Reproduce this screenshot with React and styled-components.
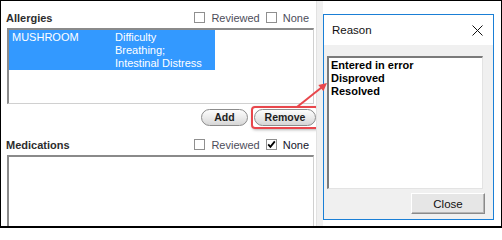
import React from "react";
import styled, { createGlobalStyle } from "styled-components";

const Global = createGlobalStyle`
  html, body { margin: 0; padding: 0; background: #fff; }
  body { font-family: "Liberation Sans", Arial, sans-serif; }
`;

const Frame = styled.div`
  position: relative;
  width: 502px;
  height: 228px;
  box-sizing: border-box;
  border: 1px solid #000;
  border-bottom-width: 2px;
  overflow: hidden;
  display: flex;
  background: #fff;
  font-family: "Liberation Sans", Arial, sans-serif;
`;

const LeftPane = styled.div`
  width: 315px;
  flex: none;
  box-sizing: border-box;
  padding-left: 6px;
  display: flex;
  flex-direction: column;
  overflow: hidden;
  & > * {
    flex-shrink: 0;
  }
`;

const SectionHeader = styled.div`
  width: 307px;
  height: 17px;
  margin-top: ${(p) => p.$top}px;
  display: flex;
  align-items: center;
  justify-content: space-between;
`;

const SectionTitle = styled.span`
  font-size: 11px;
  font-weight: bold;
  color: #2d2d2d;
  margin-left: -1px;
`;

const Checks = styled.div`
  display: flex;
  align-items: center;
  gap: 6px;
  padding-right: 5px;
`;

const CheckLabel = styled.label`
  display: flex;
  align-items: center;
  gap: 6px;
  font-size: 11px;
  color: ${(p) => (p.$dark ? "#14142a" : "#4d4d5a")};
`;

const Box = styled.span`
  width: 11px;
  height: 11px;
  box-sizing: border-box;
  border: 1px solid #8f8f8f;
  background: #fff;
  display: flex;
  align-items: center;
  justify-content: center;
`;

const ListBox = styled.div`
  width: 307px;
  height: ${(p) => p.$h}px;
  margin-top: 2px;
  box-sizing: border-box;
  border-top: 2px solid #8a8a8a;
  border-left: 2px solid #8a8a8a;
  border-right: 1px solid #d0d0d0;
  border-bottom: 1px solid #d0d0d0;
  background: #fff;
`;

const SelectedRow = styled.div`
  width: 206px;
  box-sizing: border-box;
  padding: 1px 3px 0 3px;
  background: #3399ff;
  color: #fff;
  font-size: 11px;
  line-height: 13px;
  display: grid;
  grid-template-columns: 103px 1fr;
`;

const ButtonRow = styled.div`
  width: 309px;
  margin-top: 5px;
  display: flex;
  justify-content: flex-end;
  gap: 6px;
`;

const PillButton = styled.button`
  width: ${(p) => p.$w}px;
  height: 17px;
  padding: 0;
  box-sizing: border-box;
  border: 1px solid #8c8c8c;
  border-radius: 9px;
  background: linear-gradient(#fdfdfd, #e9e9e9 55%, #d6d6d6);
  font-family: "Liberation Sans", Arial, sans-serif;
  font-size: 10.5px;
  font-weight: bold;
  color: #1e1e1e;
  line-height: 15px;
`;

const Highlight = styled.div`
  position: relative;
  display: flex;
  &::after {
    content: "";
    position: absolute;
    inset: -3px;
    border: 2px solid #e8474c;
    border-radius: 4px;
    box-shadow: 1px 1px 3px rgba(0, 0, 0, 0.3);
    pointer-events: none;
  }
`;

const Gutter = styled.div`
  width: 7px;
  flex: none;
  background: #f0f0f0;
  border-left: 1px solid #e2e2e2;
  box-sizing: border-box;
`;

const DialogArea = styled.div`
  flex: 1;
  padding-top: 13px;
  background: #fff;
`;

const Dialog = styled.div`
  width: 171px;
  height: 206px;
  box-sizing: border-box;
  border: 1px solid #1a7fd6;
  background: #f0f0f0;
  display: flex;
  flex-direction: column;
`;

const TitleBar = styled.div`
  height: 30px;
  flex: none;
  background: #fff;
  display: flex;
  align-items: center;
  justify-content: space-between;
  padding: 0 10px 0 8px;
  font-size: 11.5px;
  color: #111;
`;

const DialogBody = styled.div`
  flex: 1;
  padding: 11px 8px 5px 3px;
  display: flex;
  flex-direction: column;
  align-items: flex-start;
`;

const ReasonList = styled.div`
  width: 156px;
  height: 133px;
  flex: none;
  box-sizing: border-box;
  border-top: 2px solid #7a7a7a;
  border-left: 2px solid #7a7a7a;
  border-right: 1px solid #e3e3e3;
  border-bottom: 1px solid #e3e3e3;
  background: #fff;
  padding: 1px 2px;
  font-size: 11px;
  font-weight: bold;
  line-height: 13px;
  color: #000;
`;

const CloseButton = styled.button`
  align-self: flex-end;
  margin-top: 4px;
  width: 74px;
  height: 21px;
  flex: none;
  padding: 0;
  box-sizing: border-box;
  border: 1px solid;
  border-color: #fff #8a8a8a #8a8a8a #fff;
  box-shadow: inset -1px -1px 0 #b5b5b5;
  background: #e6e6e6;
  font-family: "Liberation Sans", Arial, sans-serif;
  font-size: 11.5px;
  color: #111;
`;

const ArrowSvg = styled.svg`
  position: absolute;
  left: 0;
  top: 0;
  pointer-events: none;
`;

const CheckBox = ({ checked }) => (
  <Box>
    {checked && (
      <svg width="9" height="9" viewBox="0 0 9 9">
        <path d="M1.2 4.4 L3.4 6.8 L7.8 1.4" fill="none" stroke="#000" strokeWidth="1.8" />
      </svg>
    )}
  </Box>
);

const Header = ({ title, top, noneChecked }) => (
  <SectionHeader $top={top}>
    <SectionTitle>{title}</SectionTitle>
    <Checks>
      <CheckLabel>
        <CheckBox />
        Reviewed
      </CheckLabel>
      <CheckLabel $dark={noneChecked}>
        <CheckBox checked={noneChecked} />
        None
      </CheckLabel>
    </Checks>
  </SectionHeader>
);

export default function App() {
  return (
    <>
      <Global />
      <Frame>
        <LeftPane>
          <Header title="Allergies" top={8} />
          <ListBox $h={76}>
            <SelectedRow>
              <span>MUSHROOM</span>
              <span>
                Difficulty
                <br />
                Breathing;
                <br />
                Intestinal Distress
              </span>
            </SelectedRow>
          </ListBox>
          <ButtonRow>
            <PillButton $w={47}>Add</PillButton>
            <Highlight>
              <PillButton $w={62}>Remove</PillButton>
            </Highlight>
          </ButtonRow>
          <Header title="Medications" top={10} noneChecked />
          <ListBox $h={90} />
        </LeftPane>
        <Gutter />
        <DialogArea>
          <Dialog>
            <TitleBar>
              <span>Reason</span>
              <svg width="11" height="11" viewBox="0 0 11 11">
                <path d="M0.5 0.5 L10.5 10.5 M10.5 0.5 L0.5 10.5" stroke="#111" strokeWidth="1" />
              </svg>
            </TitleBar>
            <DialogBody>
              <ReasonList>
                <div>Entered in error</div>
                <div>Disproved</div>
                <div>Resolved</div>
              </ReasonList>
              <CloseButton>Close</CloseButton>
            </DialogBody>
          </Dialog>
        </DialogArea>
        <ArrowSvg width="502" height="228" viewBox="0 0 502 228">
          <line x1="296" y1="106" x2="320.5" y2="86.5" stroke="#e8474c" strokeWidth="2" />
          <polygon points="326,82 322.4,90.2 317.3,84" fill="#e8474c" />
        </ArrowSvg>
      </Frame>
    </>
  );
}
